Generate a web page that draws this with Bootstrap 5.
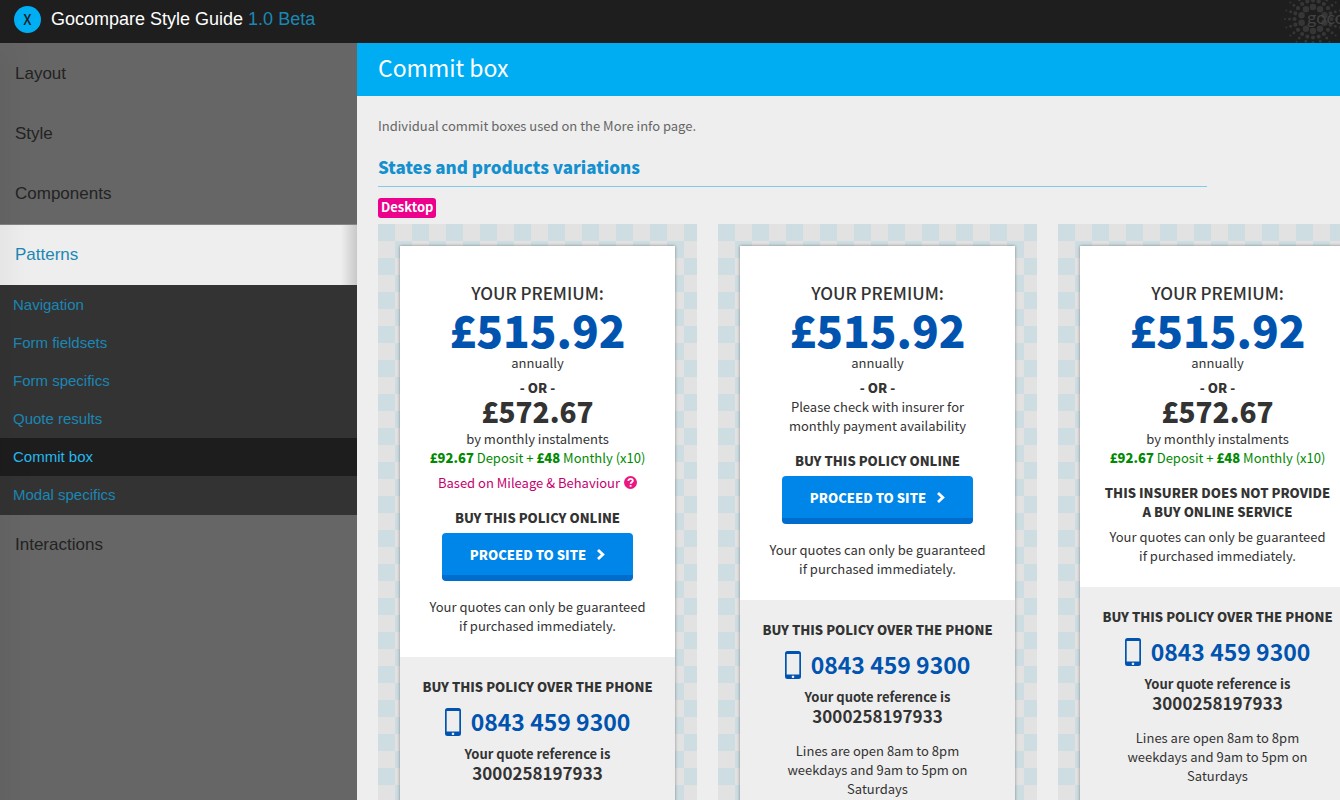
<!DOCTYPE html>
<html lang="en">
<head>
<meta charset="utf-8">
<meta name="viewport" content="width=device-width, initial-scale=1">
<title>Commit box - Gocompare Style Guide</title>
<link rel="stylesheet" href="https://cdn.jsdelivr.net/npm/bootstrap@5.3.0/dist/css/bootstrap.min.css">
<style>
  :root { --ui: "Liberation Sans", Arial, sans-serif; --copy: "Noto Sans CJK SC", "Noto Sans", sans-serif; }
  body { background: #eee; color: #333; font-family: var(--copy); font-size: 13px; line-height: 19px; }
  a { text-decoration: none; }
  b { font-weight: 900; }

  .topbar { height: 43px; background: #1e1e1e; font-family: var(--ui); font-size: 18px; z-index: 2; padding: 0 0 4px 14px; gap: 10px; }
  .topbar .version { color: #1b87b4; }
  .close-btn { width: 27px; height: 27px; border: 0; background: #00aef3; color: #1e1e1e; font-family: var(--copy); font-weight: 500; font-size: 14px; line-height: 25px; }
  .brand-mark { width: 57px; height: 43px; right: 0; top: 0; color: #363636; }

  .side { flex: 0 0 357px; background: #666; font-family: var(--ui); padding-top: 1px; }
  .side::after { content: ""; position: absolute; top: 0; bottom: 30px; left: -10px; width: 10px; box-shadow: 0 0 32px rgba(0,0,0,.15); pointer-events: none; }
  .side .section-link { display: block; padding: 0 15px; font-size: 17px; line-height: 60px; color: #232323; }
  .side .section-link.active { background: linear-gradient(to left, #c8c8c8, #eee 16px); border-top: 1px solid #858585; color: #1b87b4; }
  .submenu { background: #333; padding: 1px 0; }
  .submenu a { display: block; padding: 0 13px; font-size: 15px; line-height: 38px; color: #1b87b4; }
  .submenu a.active { background: #1d1d1d; color: #25b9ee; }

  .page-title { background: #00adf2; color: #fff; font-size: 23px; line-height: 49px; height: 53px; font-weight: 400; padding-left: 21px; }
  .content-area { padding: 20px 0 0 21px; }
  .intro { color: #666; }
  .section-title { color: #1490cf; font-size: 17px; line-height: 24px; font-weight: 900; margin: 20px 133px 11px 0; padding-bottom: 7px; border-bottom: 1px solid #7fcbe8; }
  .size-tag { background: #ec008c; color: #fff; line-height: 17px; font-weight: 700; padding: 0 3px 3px; border-radius: 3px; }

  .stages { gap: 21px; margin-top: 6px; }
  .stage { flex: 0 0 319px; padding: 22px; background: repeating-conic-gradient(#e2e2e2 0 25%, #cddde2 0 50%) 0 0 / 34px 34px; }
  .commit { background: #fff; box-shadow: 0 0 3px rgba(0,0,0,.4); padding-top: 34px; }
  .lead-in { font-size: 17px; line-height: 25px; font-weight: 500; }
  .price { font-size: 44px; line-height: 48px; font-weight: 900; color: #0054b0; }
  .price-alt { font-size: 28px; line-height: 28px; font-weight: 900; margin-bottom: 4px; }
  .head-line { font-weight: 900; }
  .gap-s { margin-top: 6px; }
  .gap-l { margin-top: 16px; }
  .deposit { color: #008a00; }
  .based { color: #c6006f; }
  .based svg { width: 13px; height: 13px; }
  .proceed { width: 191px; height: 48px; margin: 6px auto 0; border: 0; border-bottom: 6px solid #006ccb; border-radius: 4px; background: #0085e9; color: #fff; font-weight: 900; line-height: 19px; gap: 10px; }
  .proceed svg { width: 9px; height: 11px; }
  .by-phone { background: #eee; margin-top: 22px; padding: 20px 0 40px; }
  .phone-no { font-size: 23px; line-height: 31px; font-weight: 700; color: #0054b0; margin: 10px 0 7px; gap: 9px; }
  .phone-no svg { width: 17px; height: 28px; }
  .ref-no { font-size: 17px; line-height: 19px; font-weight: 700; }
</style>
</head>
<body class="overflow-hidden vh-100 d-flex flex-column">
<svg class="d-none" aria-hidden="true">
  <symbol id="i-chevron" viewBox="0 0 9 11"><path d="M2 1l4.800 4.500L2 10" fill="none" stroke="currentColor" stroke-width="2.800"/></symbol>
  <symbol id="i-help" viewBox="0 0 13 13"><circle cx="6.500" cy="6.500" r="6.500" fill="#ec1680"/><path d="M4.300 5c0-3 4.500-2.800 4.500-.2 0 1.500-2.200 1.500-2.200 3M6.600 9v1.700" fill="none" stroke="#fff" stroke-width="1.800"/></symbol>
  <symbol id="i-phone" viewBox="0 0 17 28"><path fill="#0054b0" fill-rule="evenodd" d="M2.500 0h11A2.500 2.500 0 0 1 16 2.500v23a2.500 2.500 0 0 1-2.500 2.500h-11A2.500 2.500 0 0 1 0 25.500v-23A2.500 2.500 0 0 1 2.500 0zM1.700 3v20.500h12.600V3zM8 24.500a1.300 1.300 0 1 0 .01 0z"/></symbol>
</svg>

<header class="topbar position-relative d-flex align-items-center flex-shrink-0 text-white">
  <button type="button" class="close-btn rounded-circle p-0" aria-label="Close menu">X</button>
  <a href="#" class="text-white">Gocompare Style Guide <span class="version">1.0 Beta</span></a>
  <svg class="brand-mark position-absolute" viewBox="0 0 57 43" fill="none" stroke="currentColor" stroke-linecap="round" aria-hidden="true">
    <circle cx="30" cy="19" r="12" pathLength="10" stroke-dasharray="0 1" stroke-width="6.500" transform="rotate(90 30 19)"/>
    <circle cx="30" cy="19" r="18.500" pathLength="20" stroke-dasharray="0 1" stroke-width="4.200"/>
    <circle cx="30" cy="19" r="23.500" pathLength="20" stroke-dasharray="0 1" stroke-width="3"/>
    <circle cx="30" cy="19" r="28" pathLength="20" stroke-dasharray="0 1" stroke-width="2"/>
    <text x="24" y="24" font-family="Lato, sans-serif" font-size="18" fill="#424242" stroke="none">goco</text>
  </svg>
</header>

<div class="d-flex flex-grow-1">
  <nav class="side position-relative overflow-hidden" aria-label="Style guide">
    <a class="section-link" href="#">Layout</a>
    <a class="section-link" href="#">Style</a>
    <a class="section-link" href="#">Components</a>
    <a class="section-link active" href="#">Patterns</a>
    <div class="submenu">
      <a href="#">Navigation</a>
      <a href="#">Form fieldsets</a>
      <a href="#">Form specifics</a>
      <a href="#">Quote results</a>
      <a class="active" href="#" aria-current="page">Commit box</a>
      <a href="#">Modal specifics</a>
    </div>
    <a class="section-link" href="#">Interactions</a>
  </nav>

  <main class="flex-fill overflow-hidden">
    <h1 class="page-title mb-0">Commit box</h1>
    <div class="content-area">
      <p class="intro mb-0">Individual commit boxes used on the More info page.</p>
      <h2 class="section-title">States and products variations</h2>
      <div class="d-flex"><span class="size-tag">Desktop</span></div>

      <div class="d-flex stages text-center">
        <section class="stage">
          <div class="commit">
            <div class="lead-in">YOUR PREMIUM:</div>
            <div class="price">£515.92</div>
            <div>annually</div>
            <div class="head-line gap-s">- OR -</div>
            <div class="price-alt">£572.67</div>
            <div>by monthly instalments</div>
            <div class="deposit"><b>£92.67</b> Deposit + <b>£48</b> Monthly (x10)</div>
            <div class="based gap-s d-flex justify-content-center align-items-center"><span class="me-1">Based on Mileage &amp; Behaviour</span><svg aria-hidden="true"><use href="#i-help"/></svg></div>
            <div class="head-line gap-l">BUY THIS POLICY ONLINE</div>
            <button type="button" class="proceed d-flex justify-content-center align-items-center">PROCEED TO SITE <svg aria-hidden="true"><use href="#i-chevron"/></svg></button>
            <div class="gap-l">Your quotes can only be guaranteed<br>if purchased immediately.</div>
            <div class="by-phone">
              <div class="head-line">BUY THIS POLICY OVER THE PHONE</div>
              <div class="phone-no d-flex justify-content-center align-items-center"><svg aria-hidden="true"><use href="#i-phone"/></svg>0843 459 9300</div>
              <div class="fw-bold">Your quote reference is</div>
              <div class="ref-no">3000258197933</div>
              <div class="gap-l">Lines are open 8am to 8pm<br>weekdays and 9am to 5pm on<br>Saturdays</div>
            </div>
          </div>
        </section>

        <section class="stage">
          <div class="commit">
            <div class="lead-in">YOUR PREMIUM:</div>
            <div class="price">£515.92</div>
            <div>annually</div>
            <div class="head-line gap-s">- OR -</div>
            <div>Please check with insurer for<br>monthly payment availability</div>
            <div class="head-line gap-l">BUY THIS POLICY ONLINE</div>
            <button type="button" class="proceed d-flex justify-content-center align-items-center">PROCEED TO SITE <svg aria-hidden="true"><use href="#i-chevron"/></svg></button>
            <div class="gap-l">Your quotes can only be guaranteed<br>if purchased immediately.</div>
            <div class="by-phone">
              <div class="head-line">BUY THIS POLICY OVER THE PHONE</div>
              <div class="phone-no d-flex justify-content-center align-items-center"><svg aria-hidden="true"><use href="#i-phone"/></svg>0843 459 9300</div>
              <div class="fw-bold">Your quote reference is</div>
              <div class="ref-no">3000258197933</div>
              <div class="gap-l">Lines are open 8am to 8pm<br>weekdays and 9am to 5pm on<br>Saturdays</div>
            </div>
          </div>
        </section>

        <section class="stage">
          <div class="commit">
            <div class="lead-in">YOUR PREMIUM:</div>
            <div class="price">£515.92</div>
            <div>annually</div>
            <div class="head-line gap-s">- OR -</div>
            <div class="price-alt">£572.67</div>
            <div>by monthly instalments</div>
            <div class="deposit"><b>£92.67</b> Deposit + <b>£48</b> Monthly (x10)</div>
            <div class="head-line gap-l">THIS INSURER DOES NOT PROVIDE<br>A BUY ONLINE SERVICE</div>
            <div class="gap-s">Your quotes can only be guaranteed<br>if purchased immediately.</div>
            <div class="by-phone">
              <div class="head-line">BUY THIS POLICY OVER THE PHONE</div>
              <div class="phone-no d-flex justify-content-center align-items-center"><svg aria-hidden="true"><use href="#i-phone"/></svg>0843 459 9300</div>
              <div class="fw-bold">Your quote reference is</div>
              <div class="ref-no">3000258197933</div>
              <div class="gap-l">Lines are open 8am to 8pm<br>weekdays and 9am to 5pm on<br>Saturdays</div>
            </div>
          </div>
        </section>
      </div>
    </div>
  </main>
</div>
<script src="https://cdn.jsdelivr.net/npm/bootstrap@5.3.0/dist/js/bootstrap.bundle.min.js"></script>
</body>
</html>
